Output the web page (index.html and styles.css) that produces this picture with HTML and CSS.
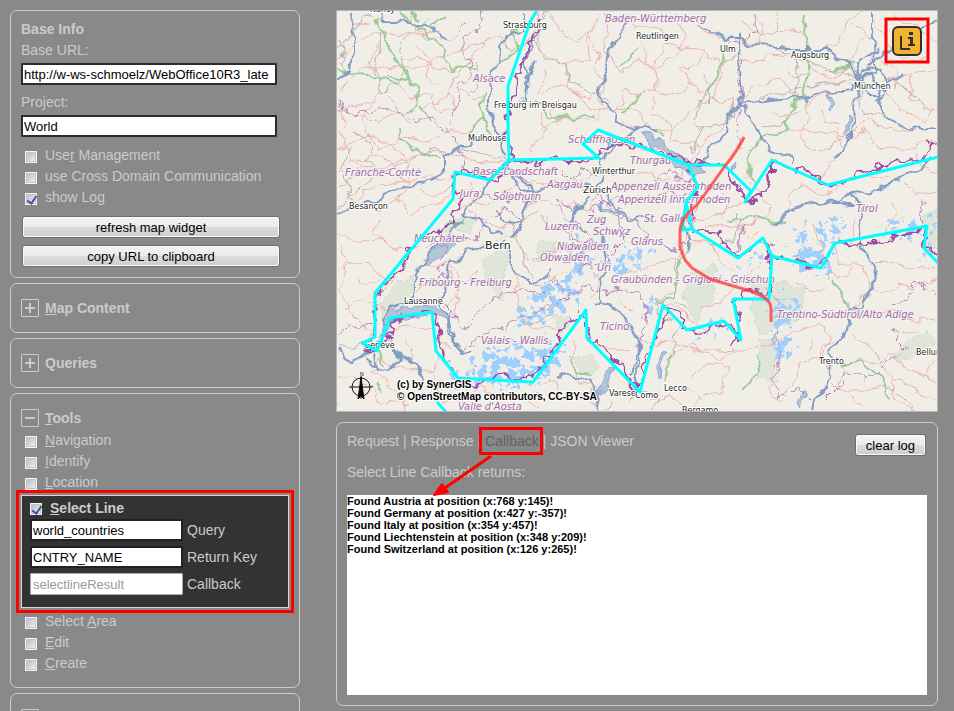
FILE: index.html
```html
<!DOCTYPE html>
<html lang="en">
<head>
<meta charset="utf-8">
<title>Map Widget</title>
<link rel="stylesheet" href="styles.css">
</head>
<body>
<div class="page">
  <aside class="sidebar">
    <section class="panel base">
      <h2 class="title">Base Info</h2>
      <label class="caption" for="url">Base URL:</label>
      <input class="field" id="url" type="text" value="http://w-ws-schmoelz/WebOffice10R3_late">
      <label class="caption spaced" for="project">Project:</label>
      <input class="field" id="project" type="text" value="World">
      <div class="options">
        <label class="option"><input type="checkbox"><span>Use<u>r</u> Management</span></label>
        <label class="option"><input type="checkbox"><span>use Cross Domain Communication</span></label>
        <label class="option"><input type="checkbox" checked><span>show Log</span></label>
      </div>
      <div class="actions">
        <button class="btn" type="button">refresh map widget</button>
        <button class="btn" type="button">copy URL to clipboard</button>
      </div>
    </section>

    <section class="panel fold">
      <h2 class="head"><button class="toggle plus" type="button" aria-label="Expand"></button><span><u>M</u>ap Content</span></h2>
    </section>
    <section class="panel fold">
      <h2 class="head"><button class="toggle plus" type="button" aria-label="Expand"></button><span>Queries</span></h2>
    </section>
    <section class="panel fold">
      <h2 class="head"><button class="toggle" type="button" aria-label="Collapse"></button><span><u>T</u>ools</span></h2>
      <div class="tools">
        <label class="option"><input type="checkbox"><span><u>N</u>avigation</span></label>
        <label class="option"><input type="checkbox"><span><u>I</u>dentify</span></label>
        <label class="option"><input type="checkbox"><span><u>L</u>ocation</span></label>
        <div class="selected">
          <label class="option strong"><input type="checkbox" checked><span><u>S</u>elect Line</span></label>
          <div class="pair"><input class="field" id="query" type="text" value="world_countries"><label for="query">Query</label></div>
          <div class="pair"><input class="field" id="key" type="text" value="CNTRY_NAME"><label for="key">Return Key</label></div>
          <div class="pair"><input class="field off" id="callback" type="text" value="selectlineResult" disabled><label for="callback">Callback</label></div>
        </div>
        <label class="option"><input type="checkbox"><span>Select <u>A</u>rea</span></label>
        <label class="option"><input type="checkbox"><span><u>E</u>dit</span></label>
        <label class="option"><input type="checkbox"><span><u>C</u>reate</span></label>
      </div>
    </section>
    <section class="panel fold">
      <h2 class="head"><button class="toggle plus" type="button" aria-label="Expand"></button></h2>
    </section>
  </aside>

  <main class="content">
    <svg class="map" viewBox="336 10 602 402" role="img" aria-label="Map of Switzerland and neighbouring regions">
      <defs>
        <filter id="wiggle" filterUnits="userSpaceOnUse" x="326" y="0" width="622" height="422">
          <feTurbulence type="fractalNoise" baseFrequency="0.07" numOctaves="2" seed="4"/>
          <feDisplacementMap in="SourceGraphic" scale="13" xChannelSelector="R" yChannelSelector="G"/>
        </filter>
        <filter id="jagged" filterUnits="userSpaceOnUse" x="326" y="0" width="622" height="422">
          <feTurbulence type="fractalNoise" baseFrequency="0.11" numOctaves="2" seed="9"/>
          <feDisplacementMap in="SourceGraphic" scale="14" xChannelSelector="R" yChannelSelector="G"/>
        </filter>
        <filter id="patchy" filterUnits="userSpaceOnUse" x="326" y="0" width="622" height="422">
          <feTurbulence type="fractalNoise" baseFrequency="0.12" numOctaves="3" seed="2" result="noise"/>
          <feDisplacementMap in="SourceGraphic" in2="noise" scale="34" xChannelSelector="R" yChannelSelector="G" result="shape"/>
          <feColorMatrix in="noise" type="matrix" values="0 0 0 0 0  0 0 0 0 0  0 0 0 0 0  0 0 22 0 -10" result="holes"/>
          <feComposite in="shape" in2="holes" operator="in"/>
        </filter>
      </defs>
      <rect class="land" x="336" y="10" width="602" height="402"/>

      <g class="park" filter="url(#wiggle)">
        <path d="M378 310L395 280 412 273 414 290 400 304 385 318ZM445 228L462 215 476 216 470 232 452 230ZM484 260L500 250 508 256 505 280 500 300 494 290 484 278ZM690 275L715 265 714 300 695 320 685 300ZM540 240L556 240 552 260 536 262ZM575 358L592 354 600 368 585 374ZM752 282L770 280 808 290 800 318 780 326 760 335 755 318ZM760 340L775 338 773 380 758 382ZM892 355L928 330 934 345 915 355 900 362ZM922 215L938 208 938 250 926 240ZM552 316L570 314 568 325 555 330Z"/>
      </g>
      <g class="glacier" filter="url(#patchy)">
        <path d="M514 312L545 286 570 278 582 290 562 308 540 320 518 326ZM474 356L500 346 545 344 560 365 548 380 510 386 474 384ZM530 360L545 336 564 350 548 378 530 386ZM578 236L594 256 586 284 572 272ZM610 262L640 248 654 250 642 264 618 276ZM638 292L658 302 650 312ZM792 264L799 224 810 250 817 250 824 236 830 258 800 272ZM818 228L838 218 844 244 826 240ZM808 264L832 260 820 276ZM766 312L780 294 792 300 806 308 792 322 772 328ZM772 340L788 334 794 352 774 362ZM440 368L468 374 455 388ZM696 328L726 316 712 338ZM878 228L930 222 905 242ZM920 222L938 218 934 236ZM916 250L932 246 928 260ZM466 374L480 392 466 388ZM742 262L760 252 754 270ZM740 178L752 186 742 188Z"/>
      </g>
      <g class="lake" filter="url(#wiggle)">
        <path d="M640 133L652 135 668 148 682 158 693 162 705 172 698 174 684 170 675 172 670 156 655 148ZM421 262L450 237 458 240 444 256 425 266ZM380 338L388 314 408 307 434 304 450 318 448 320 432 313 410 318 396 320 385 338ZM598 203L610 210 622 212 622 214 604 212ZM658 365L664 353 668 354 662 366 661 380 658 382ZM598 393L604 376 614 367 613 372 604 388ZM829 95L834 102 831 110 828 108ZM846 115L850 117 849 130 846 134ZM794 405L805 391 806 396 796 409ZM334 403L340 408ZM730 165L734 163 733 170Z"/>
      </g>

      <g class="minor" filter="url(#wiggle)">
        <path d="M338 60L360 40 385 33 400 38 440 30M338 90L362 70 390 66 412 70 440 58 470 46 500 36M336 110L380 122 390 116 420 110 450 95 460 70 490 36M380 33L372 62 382 92 362 122 380 150 400 138 430 142 450 130 470 132 480 120M340 130L352 160 378 170 400 160 420 155 440 150 470 160 505 162M346 130L340 110 352 102 372 106M400 60L420 58 450 72 470 64M395 80L410 100 430 92 440 112 456 106 448 94M336 150L350 142 372 136 400 150 412 178 398 200M336 170L370 154 390 160 402 180 430 178 452 180M336 212L355 205 366 190 400 182 424 178M350 200L380 210 400 200 410 214 440 204 452 190M336 230L352 242 378 238 400 250 420 246M340 242L346 262 370 266 390 282 372 300M346 262L340 290 350 310 366 326 372 338M345 310L360 300 385 310M392 328L410 326 430 330 444 345 436 370 420 372 400 366 380 356M380 356L372 372 390 386 406 400 400 411M336 380L350 376 372 386 380 402 410 404M430 330L440 340 456 352M436 370L442 400 460 400 480 408M540 10L538 40 546 62 566 64 570 90 590 100 596 92M548 14L560 30 578 42 590 34 600 56 596 70 606 90 598 100 605 112M566 64L590 62 588 42 600 14M545 70L540 92 560 85 576 92 590 108 600 112M605 10L610 34 600 50 616 60 622 74 640 60 655 66 656 90 640 96 624 88 618 108M640 40L646 60 660 68 680 50 684 30 676 14M655 66L666 44 700 50 718 60 724 68M656 90L680 96 690 84 682 70 700 62 704 50M618 108L640 112 652 130 672 132 690 112 697 106 712 100 722 80 724 60M600 112L618 108M655 98L650 112 672 124 670 140 700 146 720 130 736 100M700 146L690 162M690 84L708 98 736 100M740 60L754 64 772 54 790 56 806 64 814 70 820 78 850 84 856 86M742 98L756 84 782 80 792 92 806 100 840 92 856 88M742 20L762 36 778 32 802 30 812 50 806 60M778 32L776 14M812 50L836 44 850 20 862 12M820 78L840 76 866 34 850 20M802 94L810 120 800 140 816 152 840 142 852 130 870 120 892 132 922 128M836 130L842 150 830 168 812 176M760 140L790 130 820 132 850 138 866 128 878 150 900 152 922 140 938 144M875 20L890 50 902 40 922 30 938 40M880 82L910 74 938 70M885 90L900 110 924 120 938 106M882 60L896 74 894 90M910 74L912 100 935 112M540 130L560 118 590 120 600 112M530 150L545 130 540 112M600 140L622 142 640 150 664 150 680 166M530 180L545 185 560 180 582 182 600 170 620 175 640 172 672 180M525 210L540 200 558 206 575 204 590 210 600 190M455 210L470 202 490 206 500 196 510 190 522 180M470 180L476 196 468 208 478 222M476 216L500 228 520 222 536 210M494 240L504 236 516 240 530 262 546 250 576 254M420 260L440 270 450 262 464 284 478 270M450 270L458 294 446 306M430 280L410 300 426 302M460 284L455 316M510 262L518 290 522 318 530 324 552 330M545 282L570 270 594 262 600 280 592 300M620 274L640 270 660 262 676 260 684 240 694 220 720 214 740 204M690 240L712 244 720 262 736 270M706 230L720 224 740 230 760 218 772 210M700 310L720 304 740 280 762 262M660 308L672 304 690 316 700 328M672 340L690 350 720 350 750 348 772 344 800 330 822 320M670 354L690 346 716 358 738 350M690 380L704 366 724 360 730 372 720 390 702 396 690 408M680 390L696 392 702 400M650 400L670 396 690 408M820 320L830 340 824 354 800 364 792 386 778 402M835 244L836 260 860 264 870 286 862 300 850 308M850 265L840 280 832 268 828 280M854 220L848 242 862 250M812 224L822 240 826 260M870 263L890 262 910 266 938 268M868 286L890 292 900 284 912 288 938 280M850 308L870 316 896 308 902 318 938 322M836 338L822 350 828 370 844 366 860 360 880 362 890 356 912 370 938 384M880 362L892 380 896 400 912 411M912 370L922 378 934 360M845 370L836 386 830 380M836 386L850 392 870 390 890 386M892 380L912 386 938 400M740 220L752 240 760 232M790 210L788 196 800 186 830 196 842 180M750 150L748 174 758 190 772 206M778 402L770 388 780 372M890 200L896 214 886 230M905 185L918 196 938 190M560 400L556 378 540 384M575 340L572 360 580 382 600 388M587 338L610 352 630 350M640 340L655 344 672 340M470 370L490 394 520 396 540 411M498 404L510 411M445 390L470 384"/>
        <path d="M346 20L358 26 370 22M410 10L416 30 430 40 456 36 470 22M418 44L430 60 426 78 440 84M460 90L474 100 486 96M390 92L396 110 412 122M342 186L352 178 360 166M420 190L436 196 448 188M380 218L372 230 386 242M356 276L366 284 380 276M402 340L414 350 410 362M620 20L636 28 650 24 668 34M700 20L706 34 720 40M560 100L552 110 560 124M624 120L636 128 646 124M700 74L712 84 722 78M754 14L764 24 760 44M786 70L794 78 806 74M770 110L782 116 796 112M820 110L826 122 838 126M894 14L904 24 918 20M900 56L916 62 930 56M914 150L920 166 936 172M860 170L872 180 890 176M720 190L728 204 722 216M796 282L812 292 826 288M890 330L906 336 920 330M850 396L862 406M812 340L806 352M620 300L632 312M546 216L550 228"/>
      </g>
      <g class="grey" filter="url(#wiggle)">
        <path d="M336 52L350 34 372 14M345 70L340 40M380 33L378 60 372 72 384 92 405 70 400 45 430 20M336 210L370 180 400 164 436 148 480 152 507 160M354 130L370 142 374 152 362 158 380 170M475 60L478 90 470 92M500 36L512 50 530 40M545 10L532 36 548 60 565 65 570 82 600 96 612 106M724 60L742 52M727 58L712 82 700 100 694 120 702 130 692 150M804 60L818 66 856 76M858 78L830 84 790 90 760 98M862 84L858 100 866 112 884 118M884 78L908 88 925 110M744 40L770 46 796 58 798 82 794 96M862 84L852 104 854 120M860 74L850 66 824 72M452 228L440 240 428 248M510 218L518 240 530 276 546 290 550 302 548 318 524 326M576 176L584 190 597 190 606 196 620 200M680 170L690 190 698 200 690 222M675 260L676 290 656 300 655 312 670 320M740 220L735 240 712 245M336 345L350 348 366 342M540 215L552 230 560 226 570 240M780 320L778 304 765 286M762 128L782 124 800 110M672 300L690 310 676 330 674 354M736 102L730 120 698 130M866 34L876 44 870 70M855 336L874 350 884 362M882 386L895 390 914 411M350 148L342 170 350 200M630 400L645 390 660 400 652 411M594 385L590 400 604 411 612 400"/>
      </g>
      <g class="green" filter="url(#wiggle)">
        <path d="M376 16L386 40 388 54 398 64 410 80 418 90 416 106 408 112M400 12L420 28 440 46 452 70 476 64M412 24L430 26 446 18M388 76L408 78M336 70L370 78 400 82M400 128L402 138 412 148 440 160M514 28L518 50 498 64M484 92L482 120 470 132M482 118L490 134M420 106L430 124M536 102L550 116 576 118 592 114M636 50L622 68M725 52L720 72 708 90 708 104M804 14L808 46 806 84 804 98M800 98L790 112 786 132 760 140 752 148 748 170 756 184M836 70L856 66M410 12L422 18M832 280L840 296 850 306M842 368L860 362 872 370 884 382 890 400M741 392L760 372 758 355M730 220L760 218 785 220M656 302L676 296 678 262 690 244M572 358L578 372 592 374M672 354L666 370 668 382M640 96L622 112M645 126L660 136M450 222L462 226M378 352L384 364M376 384L382 394"/>
      </g>
      <g class="motor" filter="url(#wiggle)">
        <path d="M352 10L354 36 350 70 336 82M380 12L382 20 398 20 430 26 446 38M336 214L372 202 395 190 430 182 444 170 444 155 462 146 494 136 500 136 508 158M522 12L522 30 510 34 502 40 500 60 492 72 490 100 492 122 500 136M535 60L528 76 526 100 512 108M540 30L528 50 526 80M630 18L624 30 608 50 606 66 600 80 602 104 616 112 618 122 634 130 622 140M634 130L644 126 656 132M622 140L608 150 600 160 604 172 596 188 580 184 556 188 540 190 520 192 508 162M596 188L610 198 618 208 628 218 640 216 650 222M698 25L712 34 728 40 740 40 760 46 790 48 826 48 846 66 858 76 870 74 882 88 890 82 904 74M738 32L738 60 740 84 742 104 752 120 762 144 774 152 790 156 790 162M742 104L728 114 726 136 710 146 704 164M742 104L768 100 794 98 822 94 850 90 860 80M872 12L872 30 876 60 876 74 868 72 858 82M938 20L920 26 900 30 892 52 880 56 870 64M878 86L876 100 884 116 900 126 938 130M856 92L852 130 846 144 836 158M508 162L490 178 482 196 470 206 462 216M508 162L520 178 534 190 528 204 520 224 512 240M520 224L500 220 498 210M484 244L464 254 450 264 446 290 440 300M446 232L440 242 416 272 414 300 388 312 382 330M448 318L450 336 462 354M440 300L450 322 454 340 462 356 470 350M505 242L512 270 530 282 550 274M378 340L394 350 400 358 390 370 378 368 366 358M392 352L418 364 420 384M336 348L350 362 376 350M374 355L376 370M600 232L606 260 600 290 600 300 620 310 632 330 640 342 636 370 640 390M600 300L596 304M640 342L634 360 632 376M680 214L690 240 686 252M770 222L785 214 800 206 826 200 850 204 864 204M864 204L860 220 864 250 876 268 878 280 868 290 866 304 850 308 848 330 832 346 830 370 826 388 814 400 812 411M830 202L850 196 870 192 900 180 920 170 930 158M864 204L852 196M462 216L480 218 490 230 500 232M584 232L572 220 576 208 592 196M856 76L862 60 880 50M560 376L590 380 598 395 600 411M938 340L936 356M600 200L602 210M462 220L450 232"/>
        <path d="M858 76L866 68 882 70 888 84 878 98 862 88Z"/>
      </g>
      <g class="region" filter="url(#jagged)">
        <path d="M482 12L478 30 464 36 464 56 474 60 468 76 458 92 456 106 448 126M336 96L348 116 360 112 382 108 398 112 410 120 430 118 442 128 458 140 464 160 468 176M756 12L756 30 744 40 730 42M738 60L742 100 738 130 744 150M336 336L350 328 370 324M440 260L448 250 440 240 460 236 476 240 490 216 506 208 520 220 530 200 540 190M440 300L452 312 460 330 474 320 490 302 510 292 524 290 546 296M434 282L446 276 436 270 448 260M464 350L484 334 520 320 540 310 560 300 582 290M546 270L560 290 586 288 604 292 622 290 640 294M556 200L566 220 590 232 586 250 562 262M596 190L614 214 636 220 650 240 680 250M618 208L624 240 612 252 604 262 580 270M640 294L646 310 644 334 636 350M650 240L676 250 690 240M560 170L570 180 582 170 600 176M515 172L530 184 522 200 540 206M744 220L740 240 736 256M655 180L670 170 684 182 698 180M560 200L576 214 570 240 600 244M700 186L686 196 668 192 650 200M922 200L920 224M938 296L916 282 906 300 892 306M892 326L896 340 906 350 890 360 880 370 868 380 848 372 840 386 826 400M775 330L780 360 772 380 778 396 800 390 810 400M734 210L744 232 735 250M470 190L490 196 510 200 504 188M600 222L590 210 606 200"/>
      </g>
      <g class="border" filter="url(#jagged)">
        <path d="M540 18L524 60 516 86 508 110 506 140 514 158 530 164 556 158 580 162 598 156 604 148 620 144 640 146 666 154 690 162 724 165M509 160L496 182 478 174 462 168 455 174 452 190 464 194 460 204 448 226 416 240 400 270 382 286 374 308 376 334 364 350 384 346 392 332 390 322 420 312 436 314 440 340 444 356 456 376 476 386 500 374 520 380 540 370 558 344 556 336 580 314 586 318 590 340 610 352 624 372 636 392 640 376 648 352 662 326 668 308 680 312 684 328 702 332 726 322 740 340 742 322 734 304 742 290 770 294 772 276 768 262 772 246 764 240 748 252 736 256 720 236 712 230 694 232 690 214 698 186 688 170M730 170L738 190 748 202 764 194 772 174 772 160 790 168 812 172 822 186 846 182 858 174 874 168 900 160 926 157 930 144 938 142M772 256L800 260 812 270 826 262 834 242 860 246 886 240 906 234 926 228 924 246 938 256M742 330L730 344"/>
      </g>

      <g class="names">
        <text x="605" y="22">Baden-Württemberg</text>
        <text x="473" y="82">Alsace</text>
        <text x="345" y="176">Franche-Comté</text>
        <text x="568" y="143">Schaffhausen</text>
        <text x="473" y="175">Basel-Landschaft</text>
        <text x="630" y="164">Thurgau</text>
        <text x="460" y="197">Jura</text>
        <text x="493" y="200">Solothurn</text>
        <text x="547" y="188">Aargau</text>
        <text x="611" y="190">Appenzell Ausserrhoden</text>
        <text x="618" y="203">Appenzell Innerrhoden</text>
        <text x="856" y="212">Tirol</text>
        <text x="414" y="242">Neuchâtel</text>
        <text x="545" y="230">Luzern</text>
        <text x="587" y="223">Zug</text>
        <text x="644" y="222">St. Gallen</text>
        <text x="593" y="235">Schwyz</text>
        <text x="631" y="245">Glarus</text>
        <text x="557" y="250">Nidwalden</text>
        <text x="540" y="261">Obwalden</text>
        <text x="597" y="271">Uri</text>
        <text x="419" y="286">Fribourg - Freiburg</text>
        <text x="611" y="283">Graubünden - Grigioni - Grischun</text>
        <text x="600" y="330">Ticino</text>
        <text x="481" y="344">Valais - Wallis</text>
        <text x="777" y="318">Trentino-Südtirol/Alto Adige</text>
        <text x="458" y="410">Valle d'Aosta</text>
      </g>
      <g class="towns">
        <text x="370" y="12">Nancy</text>
        <text x="503" y="28">Strasbourg</text>
        <text x="636" y="39">Reutlingen</text>
        <text x="720" y="52">Ulm</text>
        <text x="791" y="58">Augsburg</text>
        <text x="854" y="89">München</text>
        <text x="494" y="108">Freiburg im Breisgau</text>
        <text x="468" y="141">Mulhouse</text>
        <text x="592" y="174">Winterthur</text>
        <text class="mid" x="583" y="193">Zürich</text>
        <text x="349" y="209">Besançon</text>
        <text class="big" x="485" y="249">Bern</text>
        <text x="404" y="304">Lausanne</text>
        <text x="364" y="348">Genève</text>
        <text x="819" y="364">Trento</text>
        <text x="916" y="355">Belluno</text>
        <text x="664" y="391">Lecco</text>
        <text x="609" y="396">Varese</text>
        <text x="635" y="398">Como</text>
        <text x="682" y="413">Bergamo</text>
      </g>

      <g class="result">
        <path d="M537 10L530 22 508 86 508 123 509 160 599 158 583 144 598 130 688 165 724 165 751 191 745 202 772 160 828 185 938 157"/>
        <path d="M509 160L490 180 455 172 453 199 375 293 375 337 362 343 377 351 390 318 432 312 436 351 458 378 533 382 586 310 587 338 640 392 663 305 687 330 724 321 741 340 733 299 769 299 772 256 821 268 835 243 927 226 924 248 938 263"/>
        <path d="M688 165L698 187 686 202 682 230 692 229 738 258 763 238 772 256M686 202L692 229M437 402L446 412M608 145L610 143"/>
      </g>
      <path class="drawn" d="M744 137Q738 150 725 166L697 205Q680 218 680 232V247L685 260 692 268 710 279 740 288Q771 296 771 308V322"/>

      <g class="compass">
        <circle cx="361" cy="387" r="9"/>
        <path d="M349 387H373M361 376V399"/>
        <path class="needle" d="M361 377L364 399 361 396 358 399Z"/>
        <text x="360" y="376">N</text>
      </g>
      <g class="credits">
        <text x="397" y="388">(c) by SynerGIS</text>
        <text x="397" y="400">© OpenStreetMap contributors, CC-BY-SA</text>
      </g>
      <g class="tool">
        <rect class="tile" x="893" y="27" width="28" height="28" rx="5"/>
        <path class="corner" d="M901 36V49H910"/>
        <path class="glyph" d="M909 32H913V35H909ZM908 37H913V44H915V46H908V44H910V39H908Z"/>
        <rect class="mark" x="886" y="19" width="42" height="43"/>
      </g>
      <rect class="frame" x="336" y="10" width="602" height="402"/>
    </svg>

    <section class="panel log">
      <div class="bar">
        <nav class="tabs">
          <a href="#request">Request</a> | <a href="#response">Response</a> | <span class="current"><a href="#callback-log">Callback</a><svg class="arrow" viewBox="0 0 62 44" aria-hidden="true"><path class="shaft" d="M59 3L10 37"/><path class="tip" d="M2 42L10 31 16 39Z"/></svg></span> | <a href="#json">JSON Viewer</a>
        </nav>
        <button class="btn clear" type="button">clear log</button>
      </div>
      <p class="message">Select Line Callback returns:</p>
      <div class="output">
        <p>Found Austria at position (x:768 y:145)!</p>
        <p>Found Germany at position (x:427 y:-357)!</p>
        <p>Found Italy at position (x:354 y:457)!</p>
        <p>Found Liechtenstein at position (x:348 y:209)!</p>
        <p>Found Switzerland at position (x:126 y:265)!</p>
      </div>
    </section>
  </main>
</div>
</body>
</html>
```
FILE: styles.css
```css
* { box-sizing: border-box; }

body {
  margin: 0;
  height: 100vh;
  overflow: hidden;
  background: #898989;
  color: #cbcbcb;
  font: 14px/21px "Liberation Sans", Arial, sans-serif;
}

h2, p { margin: 0; font-size: inherit; }
input, button { font: 13px "Liberation Sans", Arial, sans-serif; margin: 0; }
a { color: inherit; text-decoration: none; }

.page {
  display: grid;
  grid-template-columns: 290px minmax(0, 1fr);
  gap: 36px;
  padding: 10px 16px 0 10px;
}

.sidebar { display: flex; flex-direction: column; gap: 5px; }
.content { display: flex; flex-direction: column; gap: 10px; }

.panel {
  border: 1px solid #cbcbcb;
  border-radius: 7px;
  padding: 8px 10px 10px;
}

.title, .caption { display: block; }
.spaced { margin-top: 7px; }

.field {
  display: block;
  height: 22px;
  padding: 0 1px;
  border: 2px solid #2b2b2b;
  border-radius: 1px;
  background: #fff;
  color: #000;
}
.base .field { width: 256px; margin-top: 2px; }

.options { margin-top: 8px; }
.option { display: flex; align-items: center; gap: 8px; padding-left: 4px; height: 21px; }

input[type="checkbox"] {
  appearance: none;
  position: relative;
  top: 1px;
  width: 12px;
  height: 12px;
  border: 1px solid #f4f4f4;
  background: linear-gradient(135deg, #b4b8c0, #f4f4f4);
  box-shadow: inset 0 0 0 1px #c4c4c8;
}
input[type="checkbox"]:checked::after {
  content: "";
  position: absolute;
  left: 3px;
  top: 0;
  width: 4px;
  height: 8px;
  border: solid #3f51a0;
  border-width: 0 2px 2px 0;
  transform: rotate(35deg);
}

.actions { display: grid; gap: 7px; width: 258px; margin: 8px 0 0 1px; }

.btn {
  height: 22px;
  padding: 0 10px;
  border: 1px solid #6f6f6f;
  border-radius: 3px;
  background: linear-gradient(#f3f3f3 0, #ebebeb 49%, #dcdcdc 50%, #cecece 100%);
  box-shadow: inset 0 0 0 1px #fafafa;
  color: #000;
}

.fold { padding: 15px 10px; }
.head { display: flex; align-items: center; gap: 6px; height: 18px; line-height: 18px; }
.toggle {
  position: relative;
  width: 18px;
  height: 18px;
  padding: 0;
  border: 1px solid #cbcbcb;
  border-radius: 1px;
  background: none;
}
.toggle::before, .plus::after {
  content: "";
  position: absolute;
  left: 3px;
  top: 7px;
  width: 10px;
  height: 2px;
  background: #cbcbcb;
}
.plus::after { left: 7px; top: 3px; width: 2px; height: 10px; }

.tools { margin-top: 3px; }
.tools .option:last-child { margin-bottom: -2px; }

.selected {
  margin: 2px 0 3px;
  padding: 1px 8px 12px;
  border: 1px solid #d8d8d8;
  background: #333;
  outline: 3px solid #f00;
  outline-offset: 2px;
}
.strong { padding-left: 0; height: 22px; font-weight: bold; }
.selected .pair { display: flex; align-items: center; gap: 4px; margin-bottom: 5px; }
.selected .pair:last-child { margin-bottom: 0; }
.selected .field { width: 153px; border-color: #222; }
.selected .off { border: 1px solid #aaa; padding: 0 2px; color: #999; }

.map { display: block; width: 100%; height: auto; }
.map path { fill: none; stroke-linejoin: round; }
.map .land { fill: #f1eee8; }
.map .park path { fill: #dfe5d8; stroke: #c9d6c3; stroke-dasharray: 2 2; }
.map .glacier path { fill: #9fcfff; }
.map .lake path { fill: #b0c6d4; stroke: #8fa4d8; }
.minor { stroke: #ecb2ae; stroke-width: 1; }
.grey { stroke: #bbb2ac; stroke-width: 1; }
.green { stroke: #9acb97; stroke-width: 2; }
.motor { stroke: #829dc3; stroke-width: 2; }
.region { stroke: #b27fb8; stroke-width: 1; }
.border { stroke: #9b4ba4; stroke-width: 2; }
.names text {
  font: italic 11px "DejaVu Sans Condensed", "DejaVu Sans", sans-serif;
  font-stretch: condensed;
  fill: #a06ba6;
  stroke: #f6f3f2;
  stroke-width: 2px;
  paint-order: stroke;
}
.towns text {
  font: 8px "DejaVu Sans", sans-serif;
  fill: #222;
  stroke: #fff;
  stroke-width: 2px;
  paint-order: stroke;
}
.towns .mid { font-size: 9px; }
.towns .big { font-size: 11px; }
.result { stroke: #0ff; stroke-width: 3; }
.map .drawn { stroke: #ff3c3c; stroke-opacity: .8; stroke-width: 3; }
.compass { fill: none; stroke: #111; stroke-width: 1; }
.map .needle { fill: #000; }
.compass text { font: 5px "Liberation Sans", sans-serif; fill: #000; stroke: none; }
.credits text {
  font: bold 10px "Liberation Sans", Arial, sans-serif;
  fill: #000;
  stroke: #fff;
  stroke-width: 2px;
  paint-order: stroke;
}
.tile { fill: #f0b432; stroke: #33302b; stroke-width: 2; }
.corner { stroke: #33302b; stroke-width: 2; }
.map .glyph { fill: #33302b; }
.mark { fill: none; stroke: #f00; stroke-width: 3; }
.frame { fill: none; stroke: #b5b5b5; stroke-width: 2; }

.bar { display: flex; justify-content: space-between; align-items: flex-start; height: 24px; }
.current { position: relative; color: #626262; }
.current::before {
  content: "";
  position: absolute;
  inset: -6px -4px -6px -6px;
  border: 3px solid #f00;
}
.arrow { position: absolute; left: -53px; top: 20px; width: 62px; height: 44px; }
.shaft { stroke: #f00; stroke-width: 3; fill: none; }
.tip { fill: #f00; stroke: #f00; stroke-width: 2; stroke-linejoin: round; }
.clear { margin: 3px 1px 0 0; }
.message { margin: 7px 0 12px; }
.output {
  min-height: 200px;
  background: #fff;
  color: #000;
  font: bold 11px/12px "Liberation Sans", Arial, sans-serif;
}
```
